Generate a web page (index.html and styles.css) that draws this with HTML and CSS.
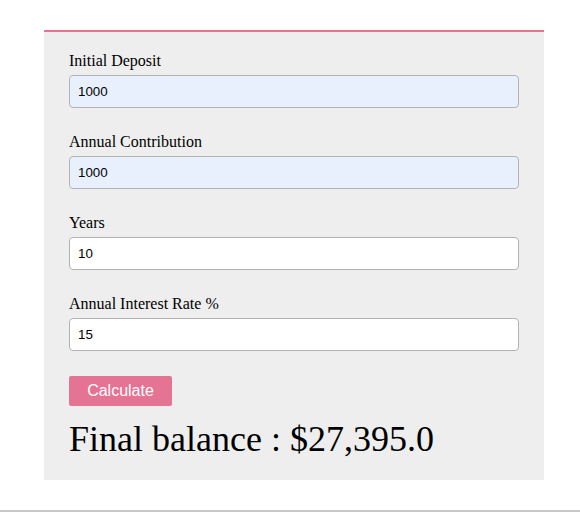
FILE: index.html
```html
<!DOCTYPE html>
<html>
<head>
<meta charset="utf-8">
<link rel="stylesheet" href="styles.css">
</head>
<body>
<div class="page">
  <form class="calc">
    <div class="field">
      <label class="label">Initial Deposit</label>
      <input class="input filled" type="text" value="1000">
    </div>
    <div class="field">
      <label class="label">Annual Contribution</label>
      <input class="input filled" type="text" value="1000">
    </div>
    <div class="field">
      <label class="label">Years</label>
      <input class="input" type="text" value="10">
    </div>
    <div class="field">
      <label class="label">Annual Interest Rate %</label>
      <input class="input" type="text" value="15">
    </div>
    <button class="btn" type="button">Calculate</button>
    <div class="result">Final balance : $27,395.0</div>
  </form>
  <div class="rule"></div>
</div>
</body>
</html>
```
FILE: styles.css
```css
html, body {
  margin: 0;
  padding: 0;
  background: #ffffff;
}
.page {
  padding-top: 30px;
}
.calc {
  width: 450px;
  margin: 0 0 0 44px;
  background: #eeeeee;
  border-top: 2px solid #e57393;
  padding: 20px 25px 20px 25px;
  font-family: "Liberation Serif", serif;
  color: #000;
}
.field {
  display: flex;
  flex-direction: column;
  margin-bottom: 25px;
}
.label {
  font-size: 16px;
  line-height: 18px;
  margin-bottom: 5px;
}
.input {
  box-sizing: border-box;
  height: 33px;
  width: 450px;
  border: 1px solid #b3b3b3;
  border-radius: 4px;
  background: #ffffff;
  padding: 0 8px;
  font-family: "Liberation Sans", Arial, sans-serif;
  font-size: 13.33px;
  color: #000;
  margin: 0;
}
.input.filled {
  background: #e8f0fe;
}
.btn {
  display: block;
  width: 103px;
  height: 30px;
  background: #e57393;
  color: #fff;
  border: none;
  border-radius: 2px;
  font-family: "Liberation Sans", Arial, sans-serif;
  font-size: 16px;
  padding: 0;
  margin: 0;
}
.result {
  margin-top: 13px;
  font-size: 36px;
  line-height: 41px;
}
.rule {
  margin-top: 30px;
  height: 0;
  border-top: 2px solid #c8c8c8;
}
```
